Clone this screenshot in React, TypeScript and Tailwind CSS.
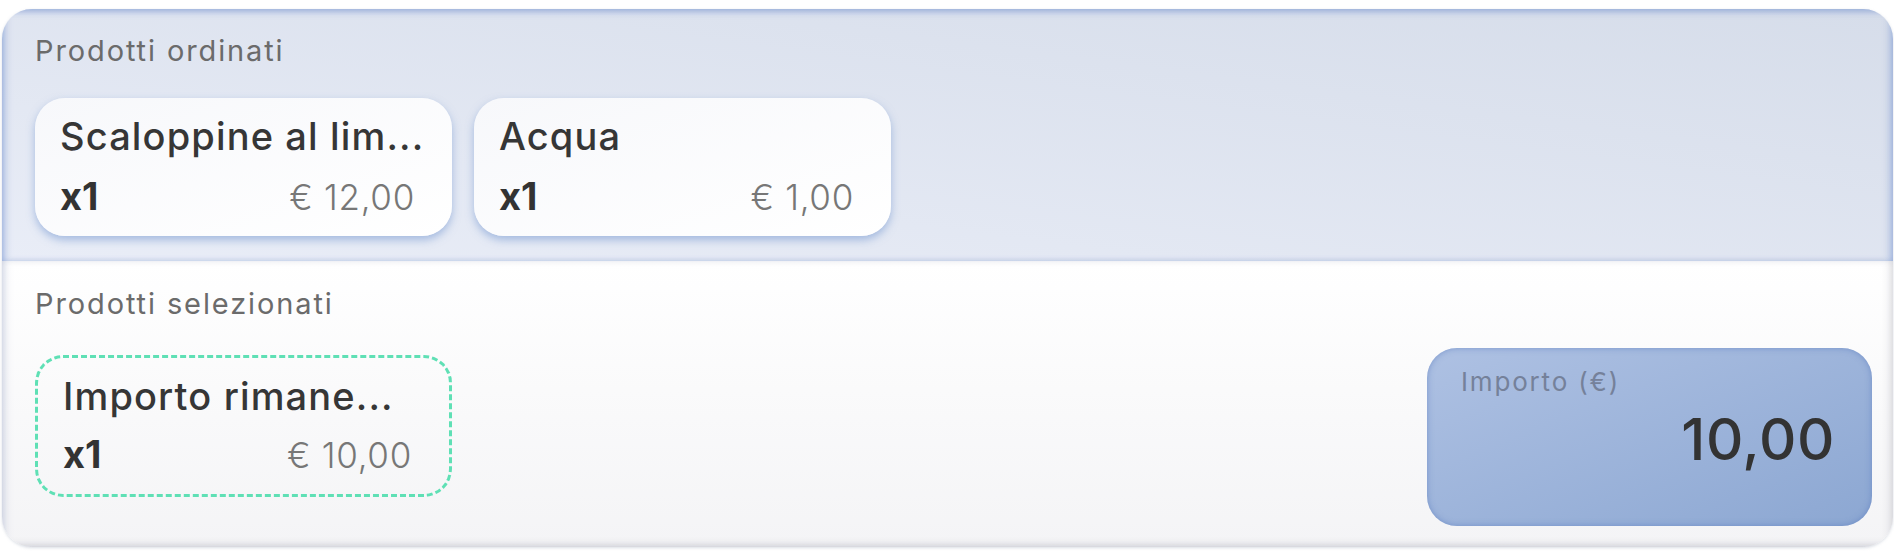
import React from 'react';

interface Item {
  name: string;
  qty: number;
  price: string;
}

const ordered: Item[] = [
  { name: 'Scaloppine al lim...', qty: 1, price: '€ 12,00' },
  { name: 'Acqua', qty: 1, price: '€ 1,00' },
];

const font = { fontFamily: 'Inter, "Noto Sans", sans-serif' };

function ProductCard({ item }: { item: Item }) {
  return (
    <div className="w-[417px] h-[138px] rounded-[30px] bg-gradient-to-br from-[#f7f8fb] to-white shadow-[0_4px_8px_rgba(110,145,205,0.55)] pl-[25px] pr-[37px] pt-[19px] box-border">
      <div className="text-[38px] leading-none font-medium tracking-[0.03em] text-[#363636] whitespace-nowrap">{item.name}</div>
      <div className="mt-[22px] flex items-baseline justify-between">
        <span className="text-[38px] leading-none font-bold text-[#333]">x{item.qty}</span>
        <span className="text-[35px] leading-none font-light tracking-[0.02em] text-[#777]">{item.price}</span>
      </div>
    </div>
  );
}

export default function App() {
  return (
    <div className="w-[1894px] h-[558px] bg-white pt-[9px] pl-[2px]" style={font}>
      <div className="w-[1891px] h-[538px] rounded-[30px] overflow-hidden flex flex-col shadow-[0_1px_3px_rgba(150,160,180,0.35)]">
        {/* ordinati */}
        <div className="h-[252px] shrink-0 px-[33px] pt-[27px] bg-gradient-to-tr from-[#e9edf7] to-[#d6ddea] shadow-[inset_0_3px_6px_rgba(120,150,210,0.55),inset_6px_0_8px_-4px_rgba(120,150,210,0.5),inset_-6px_0_8px_-4px_rgba(120,150,210,0.5)]">
          <div className="text-[29px] leading-none tracking-[0.065em] text-[#6b6b6b]">Prodotti ordinati</div>
          <div className="mt-[33px] flex gap-[22px]">
            {ordered.map((it) => (
              <ProductCard key={it.name} item={it} />
            ))}
          </div>
        </div>

        {/* selezionati */}
        <div className="flex-1 flex justify-between pl-[33px] pr-[21px] bg-gradient-to-b from-white to-[#f4f4f6] shadow-[inset_6px_0_8px_-4px_rgba(150,165,200,0.45),inset_-6px_0_8px_-4px_rgba(180,180,190,0.5),inset_0_-5px_8px_-4px_rgba(180,180,190,0.5)]">
          <div className="pt-[28px]">
            <div className="text-[29px] leading-none tracking-[0.065em] text-[#6b6b6b]">Prodotti selezionati</div>
            <div className="mt-[37px] w-[417px] h-[142px] box-border rounded-[28px] border-[3px] border-dashed border-[#5fe0b5] pl-[25px] pr-[37px] pt-[19px]">
              <div className="text-[38px] leading-none font-medium tracking-[0.03em] text-[#363636] whitespace-nowrap">Importo rimane...</div>
              <div className="mt-[20px] flex items-baseline justify-between">
                <span className="text-[38px] leading-none font-bold text-[#333]">x1</span>
                <span className="text-[35px] leading-none font-light tracking-[0.02em] text-[#777]">€ 10,00</span>
              </div>
            </div>
          </div>

          <div className="mt-[87px] w-[445px] h-[178px] box-border rounded-[30px] bg-gradient-to-br from-[#aec1e3] to-[#8ca7d2] shadow-[inset_0_0_6px_rgba(80,115,185,0.55)] pl-[34px] pr-[37px] pt-[21px]">
            <div className="text-[26px] leading-none tracking-[0.07em] text-[#75819a]">Importo (€)</div>
            <div className="mt-[15px] text-right text-[58px] leading-none font-medium tracking-[0.01em] text-[#333]">10,00</div>
          </div>
        </div>
      </div>
    </div>
  );
}
